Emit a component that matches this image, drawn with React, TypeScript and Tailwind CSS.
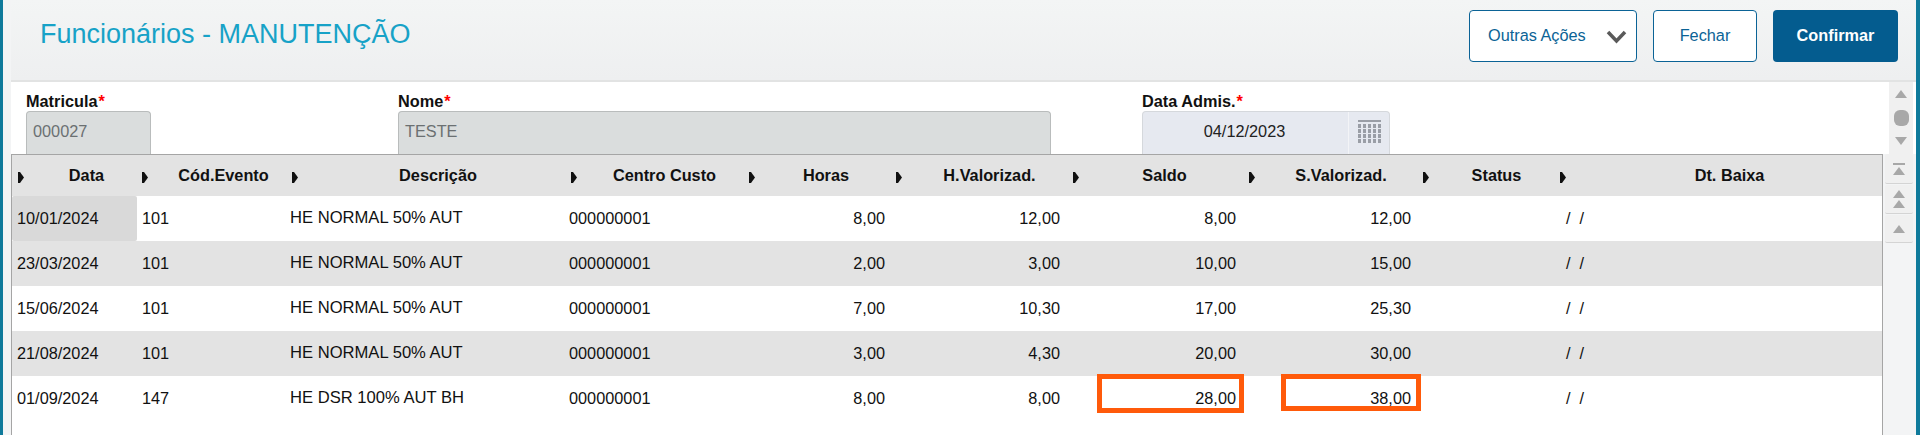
const COLUMNS = "grid-cols-[125px_150px_279px_178px_147px_177px_176px_174px_137px_1fr]";

const HEADERS = [
  { label: "Data", offset: "pl-[12px]" },
  { label: "Cód.Evento", offset: "pl-[12px]" },
  { label: "Descrição", offset: "pl-[12px]" },
  { label: "Centro Custo", offset: "pl-[8px]" },
  { label: "Horas", offset: "pl-[6px]" },
  { label: "H.Valorizad.", offset: "pl-[9px]" },
  { label: "Saldo", offset: "pl-[6px]" },
  { label: "S.Valorizad.", offset: "pl-[9px]" },
  { label: "Status", offset: "pl-[9px]" },
  { label: "Dt. Baixa", offset: "pl-[11px]" },
];

const ROWS = [
  ["10/01/2024", "101", "HE NORMAL 50% AUT", "000000001", "8,00", "12,00", "8,00", "12,00"],
  ["23/03/2024", "101", "HE NORMAL 50% AUT", "000000001", "2,00", "3,00", "10,00", "15,00"],
  ["15/06/2024", "101", "HE NORMAL 50% AUT", "000000001", "7,00", "10,30", "17,00", "25,30"],
  ["21/08/2024", "101", "HE NORMAL 50% AUT", "000000001", "3,00", "4,30", "20,00", "30,00"],
  ["01/09/2024", "147", "HE DSR 100% AUT BH", "000000001", "8,00", "8,00", "28,00", "38,00"],
];

function Triangle({ down = false }: { down?: boolean }) {
  return (
    <svg width="12" height="8" viewBox="0 0 12 8" className="block">
      <path d={down ? "M0 0H12L6 8Z" : "M6 0L12 8H0Z"} fill="#a8a8a8" />
    </svg>
  );
}

function SortArrow({ className }: { className: string }) {
  return (
    <svg width="6" height="11" viewBox="0 0 6 11" className={`mt-[3px] shrink-0 ${className}`}>
      <path d="M0 0H2L6 5.5L2 11H0Z" fill="#111" />
    </svg>
  );
}

function CalendarIcon() {
  return (
    <svg width="23" height="24" viewBox="0 0 23 24">
      <rect x="0" y="0" width="23" height="2" fill="#9a9ea6" />
      {[4, 9, 14, 19].map((y) =>
        [0, 5, 10, 15, 20].map((x) => <rect key={`${x}-${y}`} x={x} y={y} width="3" height="4" fill="#9a9ea6" />),
      )}
    </svg>
  );
}

function Field({ label, value, className }: { label: string; value: string; className: string }) {
  return (
    <div className={className}>
      <div className="h-[29px] pt-[9px] text-[16.3px] leading-[20px] font-bold text-[#111]">
        {label}
        <span className="ml-[1px] text-[#f00]">*</span>
      </div>
      <div className="flex h-[43px] items-center rounded-t-[4px] border border-b-0 border-[#b9bcbc] bg-[#dadddd] px-[6px] pb-[3px] text-[16.3px] text-[#6b7072]">
        {value}
      </div>
    </div>
  );
}

function NavButton({ children, className }: { children: React.ReactNode; className: string }) {
  return (
    <div className={`flex flex-col items-center justify-center gap-[2px] rounded-[2px] border-b border-[#d4d4d4] bg-[#f0f0f0] ${className}`}>
      {children}
    </div>
  );
}

export default function App() {
  return (
    <div className="relative flex h-[435px] w-[1920px] overflow-hidden bg-[#f3f4f5] font-['Liberation_Sans',Arial,sans-serif]">
      <div className="w-[3px] bg-[#0f7a9b]" />
      <div className="w-[8px]" />

      <div className="flex w-[1905px] flex-col">
        {/* Header */}
        <div className="flex h-[82px] items-start justify-between border-b-2 border-[#e2e3e3] bg-gradient-to-b from-[#f3f5f5] to-[#eeeff0] pl-[29px] pr-[18px]">
          <h1 className="pt-[17px] text-[27px] leading-[34px] font-normal text-[#17a2c7]">Funcionários - MANUTENÇÃO</h1>
          <div className="flex gap-[16px] pt-[10px] text-[16.3px]">
            <button className="flex h-[52px] w-[168px] items-center justify-between rounded-[4px] border border-[#0b6396] bg-white pl-[18px] pr-[9px] pb-[2px] text-[#0b6396]">
              Outras Ações
              <svg width="21" height="14" viewBox="0 0 21 14" className="mt-[4px]">
                <path d="M2 2L10.5 11L19 2" fill="none" stroke="#5a5a5a" strokeWidth="3.5" />
              </svg>
            </button>
            <button className="h-[52px] w-[104px] rounded-[4px] border border-[#0b6396] bg-white pb-[2px] text-[#0b6396]">Fechar</button>
            <button className="h-[52px] w-[125px] rounded-[4px] bg-[#045c8f] pb-[2px] font-bold text-white">Confirmar</button>
          </div>
        </div>

        {/* Form */}
        <div className="flex h-[72px] bg-white">
          <div className="flex flex-1 pl-[15px]">
            <Field label="Matricula" value="000027" className="w-[125px]" />
            <Field label="Nome" value="TESTE" className="ml-[247px] w-[653px]" />
            <div className="ml-[91px] w-[248px]">
              <div className="h-[29px] pt-[9px] text-[16.3px] leading-[20px] font-bold text-[#111]">
                Data Admis.
                <span className="ml-[1px] text-[#f00]">*</span>
              </div>
              <div className="flex h-[43px] rounded-t-[4px] border border-b-0 border-[#d5d8dc] bg-[#e6e9f0] text-[16.3px] text-[#222]">
                <div className="flex flex-1 items-center justify-center pb-[3px] pr-[2px]">04/12/2023</div>
                <div className="flex w-[41px] items-center justify-center border-l border-[#f3f4f7] pb-[3px]">
                  <CalendarIcon />
                </div>
              </div>
            </div>
          </div>
          <div className="mr-[3px] flex w-[24px] flex-col items-center justify-between bg-[#f0f0f0] pt-[8px] pb-[9px]">
            <Triangle />
            <div className="h-[16px] w-[15px] rounded-[6px] bg-[#a8a8a8]" />
            <Triangle down />
          </div>
        </div>

        {/* Grid and its paging buttons */}
        <div className="flex flex-1">
          <div className="h-full w-[1872px] border-x border-t border-[#a5a5a5] bg-white text-[16.3px] text-[#111]">
            <div className={`grid h-[41px] items-center bg-[#e3e3e3] font-bold ${COLUMNS}`}>
              {HEADERS.map((header, index) => (
                <div key={header.label} className="flex items-center">
                  <SortArrow className={index === 0 ? "ml-[6px]" : "ml-[5px]"} />
                  <span className={`flex-1 text-center ${header.offset}`}>{header.label}</span>
                </div>
              ))}
            </div>
            {ROWS.map((row, rowIndex) => (
              <div key={row[0]} className={`grid h-[45px] items-center ${COLUMNS} ${rowIndex % 2 === 1 ? "bg-[#e3e3e3]" : "bg-white"}`}>
                <div className={`flex h-full items-center pl-[5px] ${rowIndex === 0 ? "rounded-[2px] bg-[#d9d9d9]" : ""}`}>{row[0]}</div>
                <div className="pl-[5px]">{row[1]}</div>
                <div className="pl-[3px] text-[16.6px]">{row[2]}</div>
                <div className="pl-[3px]">{row[3]}</div>
                <div className="pr-[6px] text-right">{row[4]}</div>
                <div className="pr-[8px] text-right">{row[5]}</div>
                <div className="pr-[8px] text-right">{row[6]}</div>
                <div className="pr-[7px] text-right">{row[7]}</div>
                <div />
                <div className="pl-[11px]">/&nbsp;&nbsp;/</div>
              </div>
            ))}
          </div>
          <div className="ml-[2px] flex w-[28px] flex-col gap-[1px]">
            <NavButton className="h-[30px]">
              <div className="h-[2px] w-[12px] bg-[#a8a8a8]" />
              <Triangle />
            </NavButton>
            <NavButton className="h-[29px]">
              <Triangle />
              <Triangle />
            </NavButton>
            <NavButton className="h-[28px]">
              <Triangle />
            </NavButton>
          </div>
        </div>
      </div>

      <div className="w-[4px] bg-[#0f7a9b]" />

      {/* Annotation boxes drawn over the grid */}
      <div className="absolute left-[1097px] top-[374px] h-[39px] w-[147px] border-[5px] border-[#ff5a0a]" />
      <div className="absolute left-[1281px] top-[374px] h-[37px] w-[140px] border-[5px] border-[#ff5a0a]" />
    </div>
  );
}
